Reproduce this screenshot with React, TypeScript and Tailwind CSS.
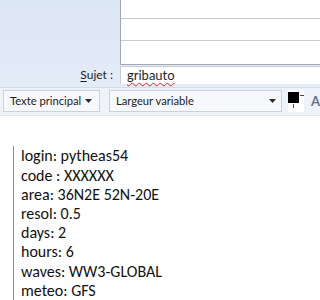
import React from "react";

export default function App() {
  const lines = [
    "login: pytheas54",
    "code : XXXXXX",
    "area: 36N2E 52N-20E",
    "resol: 0.5",
    "days: 2",
    "hours: 6",
    "waves: WW3-GLOBAL",
    "meteo: GFS",
  ];
  return (
    <div
      className="w-[320px] h-[300px] overflow-hidden bg-white flex flex-col"
      style={{ fontFamily: '"Segoe UI", Lato, "Noto Sans", sans-serif' }}
    >
      {/* header area */}
      <div className="h-[87px] bg-gradient-to-b from-[#dce7f4] to-[#e3ecf7] flex flex-col">
        <div className="flex h-[65px]">
          <div className="w-[120px]" />
          <div className="flex-1 bg-white border-l border-b border-[#a3a9b1] flex flex-col">
            <div className="h-[19px] border-b border-[#cbcbcb]" />
            <div className="h-[22px] border-b border-[#cbcbcb]" />
            <div className="flex-1" />
          </div>
        </div>
        <div className="flex h-[18px] mt-[1px]">
          <div className="w-[120px] flex items-center justify-end pr-[7px] text-[12px] text-[#1e1e1e] whitespace-nowrap">
            <span>
              <span className="underline underline-offset-2">S</span>ujet :
            </span>
          </div>
          <div className="flex-1 bg-white border-l border-t border-[#c5ccd6] flex items-center pl-[6px] text-[13px] text-[#1e1e1e]">
            <span className="underline decoration-wavy decoration-[#d22] decoration-1 underline-offset-2 leading-none">
              gribauto
            </span>
          </div>
        </div>
      </div>
      {/* toolbar */}
      <div className="h-[30px] bg-[#eef3fa] border-t border-[#d3dcea] border-b border-b-[#dde4ee] flex items-center pl-[3px] text-[11.2px] text-[#1e1e1e] whitespace-nowrap">
        <div className="w-[97px] h-[22px] bg-[#f6f8fc] border border-[#c9d3e0] flex items-center pl-[6px] pr-[7px] justify-between">
          <span>Texte principal</span>
          <svg width="7" height="4" viewBox="0 0 7 4" className="shrink-0">
            <path d="M0 0H7L3.5 4Z" fill="#2b2b2b" />
          </svg>
        </div>
        <div className="ml-[9px] w-[173px] h-[22px] bg-[#f6f8fc] border border-[#c9d3e0] flex items-center pl-[6px] pr-[5px] justify-between">
          <span>Largeur variable</span>
          <svg width="7" height="4" viewBox="0 0 7 4" className="shrink-0">
            <path d="M0 0H7L3.5 4Z" fill="#2b2b2b" />
          </svg>
        </div>
        <div className="ml-[6px] w-[16px] h-[22px] relative bg-white shrink-0">
          <div className="absolute left-0 top-[2px] w-[11px] h-[11px] bg-black" />
          <div className="absolute left-[12px] top-[5px] w-[4px] h-[1px] bg-[#444]" />
          <div className="absolute left-[5px] top-[14px] w-[1px] h-[4px] bg-[#555]" />
        </div>
        <span className="ml-[7px] font-bold text-[13px] text-[#5f7290]">A</span>
      </div>
      {/* body */}
      <div className="flex-1 bg-white pt-[30px] pl-[13px]">
        <div
          className="border-l border-[#8c8c8c] pl-[7px] text-[16px] leading-[19.2px] text-[#111]"
          style={{ fontFamily: 'Carlito, Calibri, Lato, sans-serif' }}
        >
          {lines.map((l) => (
            <div key={l}>{l}</div>
          ))}
        </div>
      </div>
    </div>
  );
}
